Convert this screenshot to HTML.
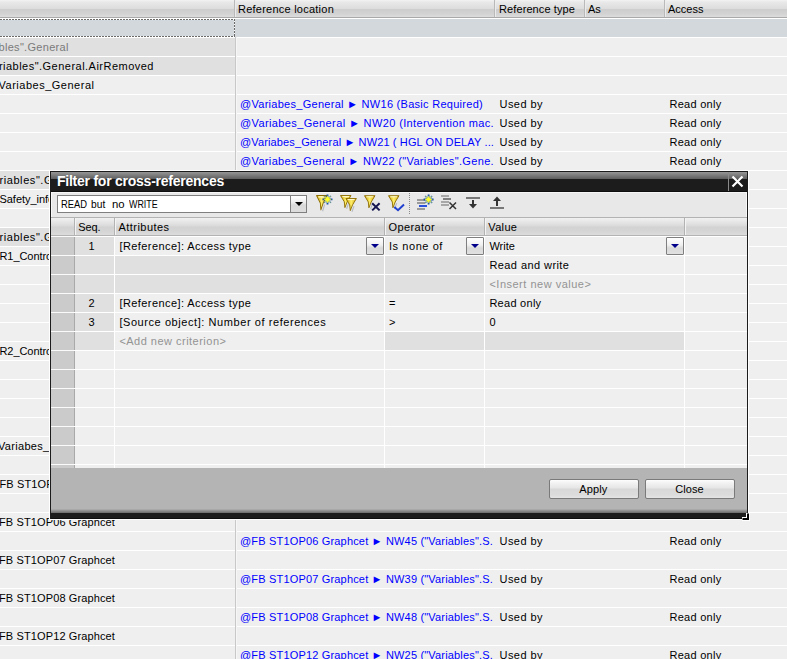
<!DOCTYPE html>
<html><head><meta charset="utf-8">
<style>
*{box-sizing:border-box;margin:0;padding:0}
html,body{width:787px;height:659px;overflow:hidden}
body{position:relative;background:#efefef;font-family:"Liberation Sans", sans-serif;font-size:11px;color:#000}
.a{position:absolute}
.tx{position:absolute;white-space:pre}
/* background rows: white line every 19px starting y=18 */
#rows{position:absolute;left:0;top:18px;width:787px;height:641px;
 background:repeating-linear-gradient(to bottom,#ffffff 0,#ffffff 1px,#efefef 1px,#efefef 19px)}
#hdr{position:absolute;left:0;top:0;width:787px;height:18px;
 background:linear-gradient(to bottom,#f3f3f3 0,#e9e9e9 2px,#dcdcdc 9px,#cdcdcd 9px,#d3d3d3 14px,#dcdcdc 17px);
 border-bottom:1px solid #a9a9a9}
.hsep{position:absolute;top:0;width:1px;height:17px;background:#b9b9b9;box-shadow:1px 0 0 #ececec}
.dk{position:absolute;left:0;width:235px;height:18px;background:#e0e0e0}
#sel{position:absolute;left:0;top:19px;width:787px;height:18px;background:#d3d8dc}
#selb{position:absolute;left:0;top:19px;width:235px;height:18px;
 background:repeating-linear-gradient(to right,#6a6a6a 0,#6a6a6a 2px,#fff 2px,#fff 3px) top left/100% 1px no-repeat,repeating-linear-gradient(to right,#6a6a6a 0,#6a6a6a 2px,#fff 2px,#fff 3px) bottom left/100% 1px no-repeat,repeating-linear-gradient(to bottom,#6a6a6a 0,#6a6a6a 2px,#fff 2px,#fff 3px) top right/1px 100% no-repeat}
#vl{position:absolute;left:235px;top:37px;width:1px;height:622px;background:#c8c8c8;box-shadow:1px 0 0 #f6f6f6}

/* dialog */
#dlg{position:absolute;left:49px;top:170px;width:700px;height:350px;border:1px solid #fff}
#dlgin{position:absolute;left:50px;top:171px;width:698px;height:348px;background:#1c1c1c}
#title{position:absolute;left:51px;top:172px;width:696px;height:20px;
 background:linear-gradient(to bottom,#969696 0,#5e5e5e 7px,#1c1c1c 7px,#1c1c1c 19px,#0e0e0e 19px)}
#cbsep{position:absolute;left:728px;top:172px;width:1px;height:19px;background:#8a8a8a}
#body{position:absolute;left:51px;top:192px;width:696px;height:276px;background:#e8e8e8;
 border-top:1px solid #f6f6f6;border-left:1px solid #f8f8f8;border-right:1px solid #f8f8f8}
#combo{position:absolute;left:57px;top:195px;width:250px;height:18px;background:#fff;border:1px solid #7f7f7f}
#cbtn{position:absolute;left:290px;top:195px;width:17px;height:18px;border:1px solid #7f7f7f;
 background:linear-gradient(to bottom,#ffffff 0,#eeeeee 6px,#d9d9d9 9px,#dedede 17px)}
.tri{position:absolute;width:0;height:0;border-left:4px solid transparent;border-right:4px solid transparent;border-top:4px solid #000}
#grid{position:absolute;left:51px;top:217px;width:696px;height:251px;background:#efefef;border-top:1px solid #b3b3b3}
#ghdr{position:absolute;left:51px;top:218px;width:696px;height:18px;
 background:linear-gradient(to bottom,#f1f1f1 0,#e6e6e6 4px,#dadada 8px,#d2d2d2 9px,#d6d6d6 14px,#dcdcdc 17px);
 border-bottom:1px solid #b3b3b3}
.gsep{position:absolute;top:218px;width:1px;height:17px;background:#b3b3b3;box-shadow:1px 0 0 #f4f4f4}
#grows{position:absolute;left:51px;top:236px;width:696px;height:232px;
 background:repeating-linear-gradient(to bottom,#ffffff 0,#ffffff 1px,#efefef 1px,#efefef 19px)}
#rh{position:absolute;left:51px;top:236px;width:23px;height:232px;
 background:repeating-linear-gradient(to bottom,#fafafa 0,#fafafa 1px,#cbcbcb 1px,#cbcbcb 19px)}
#rhl{position:absolute;left:74px;top:236px;width:1px;height:232px;background:repeating-linear-gradient(to bottom,#fff 0,#fff 1px,#a9a9a9 1px,#a9a9a9 19px)}
.gv{position:absolute;top:236px;width:1px;height:232px;background:#ffffff}
.gc{position:absolute;height:18px;background:#e0e0e0}
.dd{position:absolute;width:18px;height:18px;border:1px solid #7f7f7f;border-radius:1px;
 background:linear-gradient(to bottom,#ffffff 0,#f0f0f0 7px,#d9d9d9 10px,#e2e2e2 17px)}
.dd i{position:absolute;left:4px;top:6px;width:0;height:0;border-left:4px solid transparent;border-right:4px solid transparent;border-top:4px solid #00008b}
#foot{position:absolute;left:51px;top:468px;width:696px;height:45px;
 background:linear-gradient(to bottom,#b4b4b4 0,#b4b4b4 41px,#9c9c9c 42px,#7c7c7c 44px,#6a6a6a 45px)}
#fdark{position:absolute;left:51px;top:513px;width:696px;height:6px;background:linear-gradient(to bottom,#1c1c1c 0,#1c1c1c 5px,#0e0e0e 5px)}
.btn{position:absolute;top:479px;height:20px;border:1px solid #7a7a7a;border-radius:2px;
 background:linear-gradient(to bottom,#fdfdfd 0,#f2f2f2 3px,#e6e6e6 8px,#d8d8d8 9px,#dcdcdc 15px,#e4e4e4 18px)}
#grip{position:absolute;left:741px;top:512px;width:9px;height:9px}
</style></head><body>
<div id="rows"></div>
<div class="dk" style="top:38px"></div>
<div class="dk" style="top:57px"></div>
<div class="dk" style="top:171px"></div>
<div class="dk" style="top:228px"></div>
<div id="sel"></div>
<div id="selb"></div>
<div id="vl"></div>
<div id="hdr"></div>
<div class="hsep" style="left:234px"></div>
<div class="hsep" style="left:494px"></div>
<div class="hsep" style="left:584px"></div>
<div class="hsep" style="left:664px"></div>
<div class='tx' style='top:1px;height:17px;line-height:17px;color:#000;letter-spacing:0.237px;left:238px;'>Reference location</div>
<div class='tx' style='top:1px;height:17px;line-height:17px;color:#000;letter-spacing:0.099px;left:499px;'>Reference type</div>
<div class='tx' style='top:1px;height:17px;line-height:17px;color:#000;left:588px;'>As</div>
<div class='tx' style='top:1px;height:17px;line-height:17px;color:#000;left:668px;'>Access</div>
<div class='tx' style='top:38px;height:18px;line-height:18px;color:#7a7a7a;letter-spacing:0.300px;right:718.3px;'>ariables".General</div>
<div class='tx' style='top:57px;height:18px;line-height:18px;color:#000;letter-spacing:0.479px;right:633.1px;'>riables".General.AirRemoved</div>
<div class='tx' style='top:76px;height:18px;line-height:18px;color:#000;letter-spacing:0.509px;right:692.5px;'>Variabes_General</div>
<div class='tx' style='top:171px;height:18px;line-height:18px;color:#000;letter-spacing:0.569px;left:-0.5px;'>riables".General</div>
<div class='tx' style='top:190px;height:18px;line-height:18px;color:#000;letter-spacing:-0.042px;left:-0.5px;'>Safety_info</div>
<div class='tx' style='top:228px;height:18px;line-height:18px;color:#000;letter-spacing:0.569px;left:-0.5px;'>riables".General</div>
<div class='tx' style='top:247px;height:18px;line-height:18px;color:#000;letter-spacing:-0.072px;left:-0.5px;'>R1_Control</div>
<div class='tx' style='top:342px;height:18px;line-height:18px;color:#000;letter-spacing:-0.072px;left:-0.5px;'>R2_Control</div>
<div class='tx' style='top:437px;height:18px;line-height:18px;color:#000;letter-spacing:0.309px;left:-2px;'>Variabes_General</div>
<div class='tx' style='top:475px;height:18px;line-height:18px;color:#000;letter-spacing:0.120px;left:-0.5px;'>FB ST1OP01 Graphcet</div>
<div class='tx' style='top:513px;height:18px;line-height:18px;color:#000;letter-spacing:0.120px;left:-1px;'>FB ST1OP06 Graphcet</div>
<div class='tx' style='top:551px;height:18px;line-height:18px;color:#000;letter-spacing:0.120px;left:-1px;'>FB ST1OP07 Graphcet</div>
<div class='tx' style='top:589px;height:18px;line-height:18px;color:#000;letter-spacing:0.120px;left:-1px;'>FB ST1OP08 Graphcet</div>
<div class='tx' style='top:627px;height:18px;line-height:18px;color:#000;letter-spacing:0.120px;left:-1px;'>FB ST1OP12 Graphcet</div>
<div class='tx' style='top:95px;height:18px;line-height:18px;color:#0000ff;letter-spacing:0.279px;left:240px;'>@Variabes_General ► NW16 (Basic Required)</div>
<div class='tx' style='top:95px;height:18px;line-height:18px;color:#000;letter-spacing:0.449px;left:499.5px;'>Used by</div>
<div class='tx' style='top:95px;height:18px;line-height:18px;color:#000;letter-spacing:0.273px;left:669.5px;'>Read only</div>
<div class='tx' style='top:114px;height:18px;line-height:18px;color:#0000ff;letter-spacing:0.380px;left:240px;'>@Variabes_General ► NW20 (Intervention mac.</div>
<div class='tx' style='top:114px;height:18px;line-height:18px;color:#000;letter-spacing:0.449px;left:499.5px;'>Used by</div>
<div class='tx' style='top:114px;height:18px;line-height:18px;color:#000;letter-spacing:0.273px;left:669.5px;'>Read only</div>
<div class='tx' style='top:133px;height:18px;line-height:18px;color:#0000ff;letter-spacing:0.129px;left:240px;'>@Variabes_General ► NW21 ( HGL ON DELAY ...</div>
<div class='tx' style='top:133px;height:18px;line-height:18px;color:#000;letter-spacing:0.449px;left:499.5px;'>Used by</div>
<div class='tx' style='top:133px;height:18px;line-height:18px;color:#000;letter-spacing:0.273px;left:669.5px;'>Read only</div>
<div class='tx' style='top:152px;height:18px;line-height:18px;color:#0000ff;letter-spacing:0.345px;left:240px;'>@Variabes_General ► NW22 ("Variables".Gene.</div>
<div class='tx' style='top:152px;height:18px;line-height:18px;color:#000;letter-spacing:0.449px;left:499.5px;'>Used by</div>
<div class='tx' style='top:152px;height:18px;line-height:18px;color:#000;letter-spacing:0.273px;left:669.5px;'>Read only</div>
<div class='tx' style='top:532px;height:18px;line-height:18px;color:#0000ff;letter-spacing:0.175px;left:240px;'>@FB ST1OP06 Graphcet ► NW45 ("Variables".S.</div>
<div class='tx' style='top:532px;height:18px;line-height:18px;color:#000;letter-spacing:0.449px;left:499.5px;'>Used by</div>
<div class='tx' style='top:532px;height:18px;line-height:18px;color:#000;letter-spacing:0.273px;left:669.5px;'>Read only</div>
<div class='tx' style='top:570px;height:18px;line-height:18px;color:#0000ff;letter-spacing:0.175px;left:240px;'>@FB ST1OP07 Graphcet ► NW39 ("Variables".S.</div>
<div class='tx' style='top:570px;height:18px;line-height:18px;color:#000;letter-spacing:0.449px;left:499.5px;'>Used by</div>
<div class='tx' style='top:570px;height:18px;line-height:18px;color:#000;letter-spacing:0.273px;left:669.5px;'>Read only</div>
<div class='tx' style='top:608px;height:18px;line-height:18px;color:#0000ff;letter-spacing:0.175px;left:240px;'>@FB ST1OP08 Graphcet ► NW48 ("Variables".S.</div>
<div class='tx' style='top:608px;height:18px;line-height:18px;color:#000;letter-spacing:0.449px;left:499.5px;'>Used by</div>
<div class='tx' style='top:608px;height:18px;line-height:18px;color:#000;letter-spacing:0.273px;left:669.5px;'>Read only</div>
<div class='tx' style='top:646px;height:18px;line-height:18px;color:#0000ff;letter-spacing:0.175px;left:240px;'>@FB ST1OP12 Graphcet ► NW25 ("Variables".S.</div>
<div class='tx' style='top:646px;height:18px;line-height:18px;color:#000;letter-spacing:0.449px;left:499.5px;'>Used by</div>
<div class='tx' style='top:646px;height:18px;line-height:18px;color:#000;letter-spacing:0.273px;left:669.5px;'>Read only</div>

<!-- dialog -->
<div id="dlg"></div>
<div id="dlgin"></div>
<div id="title"></div>
<div id="cbsep"></div>
<svg class="a" style="left:731px;top:175px" width="13" height="13" viewBox="0 0 13 13"><path d="M1.5 1.5L11.5 11.5M11.5 1.5L1.5 11.5" stroke="#fff" stroke-width="2.2" fill="none"/></svg>
<div id="body"></div>
<div id="combo"></div>
<div id="cbtn"><div class="tri" style="left:4px;top:6px;border-left-width:4px;border-right-width:4px;border-top-width:4px"></div></div>

<!-- toolbar icons -->
<svg class="a" style="left:312px;top:192px" width="200" height="24" viewBox="0 0 200 24">
 <defs>
  <linearGradient id="gold" x1="0" y1="0" x2="1" y2="0">
   <stop offset="0" stop-color="#c89e00"/><stop offset="0.5" stop-color="#fff06a"/><stop offset="1" stop-color="#d0a40a"/>
  </linearGradient>
  <g id="fun">
   <path d="M7.6 7.5L5.6 13.2" stroke="#a0a8b8" stroke-width="1.1" opacity="0.7" transform="translate(1 0.6)"/>
   <path d="M0.5 0.5H11L7.2 6.8L4.9 12.6L4.3 6.8Z" fill="url(#gold)" stroke="#8c6c00" stroke-width="0.9" stroke-linejoin="round"/>
   <path d="M2.3 1.6H9.2" stroke="#fffbd8" stroke-width="1"/>
  </g>
  <g id="star">
   <path d="M-3.5 -3.5L3.5 3.5M3.5 -3.5L-3.5 3.5" stroke="#2a68b8" stroke-width="1.3"/>
   <path d="M0 -5V5M-5 0H5" stroke="#1a50a0" stroke-width="1.8"/>
   <circle r="2.3" fill="#ffff28"/>
   <path d="M-3 -3L3 3M3 -3L-3 3M0 -3.6V3.6M-3.6 0H3.6" stroke="#ffff28" stroke-width="0.8"/>
  </g>
 </defs>
 <use href="#fun" transform="translate(4 3) scale(1 1.18)"/>
 <use href="#star" x="15.5" y="7.4"/>
 <use href="#fun" x="28" y="3"/>
 <use href="#fun" x="33.4" y="6"/>
 <use href="#fun" x="52" y="3.2"/>
 <path d="M60.2 11.2L67.6 18.4M67.6 11.2L60.2 18.4" stroke="#141450" stroke-width="2"/>
 <use href="#fun" x="76" y="3.2"/>
 <path d="M82.3 15L86 18.2L92 12.6" stroke="#2040d0" stroke-width="2" fill="none"/>
 <!-- separator -->
 <path d="M97.5 1V22" stroke="#8a8a8a" stroke-width="1" stroke-dasharray="1 1"/>
 <!-- icon5 list + star -->
 <rect x="105" y="7" width="8" height="2" fill="#9a9a9a"/>
 <rect x="105" y="10" width="8" height="2" fill="#9a9a9a"/>
 <rect x="107" y="13" width="8" height="2" fill="#2a50e0"/>
 <rect x="105" y="16" width="8" height="2" fill="#9a9a9a"/>
 <use href="#star" x="116.6" y="7.5"/>
 <!-- icon6 list delete -->
 <rect x="129" y="3" width="8" height="2" fill="#a8a8a8"/>
 <rect x="131" y="6" width="8" height="2" fill="#808080"/>
 <rect x="129" y="9" width="8" height="2" fill="#a8a8a8"/>
 <rect x="129" y="12" width="8" height="2" fill="#a8a8a8"/>
 <path d="M137.5 10.5L144 17M144 10.5L137.5 17" stroke="#333" stroke-width="1.5"/>
 <!-- icon7 move down -->
 <rect x="154" y="5" width="14" height="2" fill="#777"/>
 <path d="M161 8V13" stroke="#333" stroke-width="2"/>
 <path d="M157 12H165L161 16.5Z" fill="#333"/>
 <!-- icon8 move up -->
 <path d="M181 9H189L185 4.5Z" fill="#333"/>
 <path d="M185 9V14" stroke="#333" stroke-width="2"/>
 <rect x="178" y="15" width="14" height="2" fill="#777"/>
</svg>

<!-- grid -->
<div id="grid"></div>
<div id="ghdr"></div>
<div class="gsep" style="left:74px"></div>
<div class="gsep" style="left:114px"></div>
<div class="gsep" style="left:384px"></div>
<div class="gsep" style="left:484px"></div>
<div class="gsep" style="left:684px"></div>
<div id="grows"></div>
<!-- gray cells -->
<div class="gc" style="left:75px;top:237px;width:39px;height:113px;background:repeating-linear-gradient(to bottom,#e0e0e0 0,#e0e0e0 18px,#fff 18px,#fff 19px)"></div>
<div class="gc" style="left:115px;top:256px;width:269px;height:37px;background:repeating-linear-gradient(to bottom,#e0e0e0 0,#e0e0e0 18px,#fff 18px,#fff 19px)"></div>
<div class="gc" style="left:385px;top:256px;width:99px;height:37px;background:repeating-linear-gradient(to bottom,#e0e0e0 0,#e0e0e0 18px,#fff 18px,#fff 19px)"></div>
<div class="gc" style="left:385px;top:332px;width:99px"></div>
<div class="gc" style="left:485px;top:332px;width:199px"></div>
<div class="gv" style="left:114px"></div>
<div class="gv" style="left:384px"></div>
<div class="gv" style="left:484px"></div>
<div class="gv" style="left:684px"></div>
<div id="rh"></div>
<div id="rhl"></div>
<div class="dd" style="left:366px;top:237px"><i></i></div>
<div class="dd" style="left:466px;top:237px"><i></i></div>
<div class="dd" style="left:666px;top:237px"><i></i></div>

<div id="foot"></div>
<div id="fdark"></div>
<div class="btn" style="left:549px;width:90px"></div>
<div class="btn" style="left:645px;width:90px"></div>
<svg id="grip" viewBox="0 0 9 9"><path d="M7 1V7H1" stroke="#fff" stroke-width="4" fill="none"/><path d="M7 1.5V7H1.5" stroke="#000" stroke-width="2" fill="none"/></svg>
<div class='tx' style='top:172px;height:19px;line-height:19px;color:#fff;font-size:14px;font-weight:bold;letter-spacing:-0.242px;left:57px;'>Filter for cross-references</div>
<div class='tx' style='top:219px;height:17px;line-height:17px;color:#000;letter-spacing:-0.160px;left:78.3px;'>Seq.</div>
<div class='tx' style='top:219px;height:17px;line-height:17px;color:#000;letter-spacing:0.453px;left:118.5px;'>Attributes</div>
<div class='tx' style='top:219px;height:17px;line-height:17px;color:#000;letter-spacing:0.385px;left:388.5px;'>Operator</div>
<div class='tx' style='top:219px;height:17px;line-height:17px;color:#000;letter-spacing:0.334px;left:488.3px;'>Value</div>
<div class='tx' style='top:237px;height:18px;line-height:18px;color:#000;left:88.6px;'>1</div>
<div class='tx' style='top:237px;height:18px;line-height:18px;color:#000;letter-spacing:0.430px;left:119.4px;'>[Reference]: Access type</div>
<div class='tx' style='top:237px;height:18px;line-height:18px;color:#000;letter-spacing:0.567px;left:389px;'>Is none of</div>
<div class='tx' style='top:237px;height:18px;line-height:18px;color:#000;left:489.4px;'>Write</div>
<div class='tx' style='top:256px;height:18px;line-height:18px;color:#000;letter-spacing:0.429px;left:489.4px;'>Read and write</div>
<div class='tx' style='top:275px;height:18px;line-height:18px;color:#939393;letter-spacing:0.503px;left:489.4px;'>&lt;Insert new value&gt;</div>
<div class='tx' style='top:294px;height:18px;line-height:18px;color:#000;left:88.6px;'>2</div>
<div class='tx' style='top:294px;height:18px;line-height:18px;color:#000;letter-spacing:0.430px;left:119.4px;'>[Reference]: Access type</div>
<div class='tx' style='top:294px;height:18px;line-height:18px;color:#000;left:389px;'>=</div>
<div class='tx' style='top:294px;height:18px;line-height:18px;color:#000;letter-spacing:0.273px;left:489.4px;'>Read only</div>
<div class='tx' style='top:313px;height:18px;line-height:18px;color:#000;left:88.6px;'>3</div>
<div class='tx' style='top:313px;height:18px;line-height:18px;color:#000;letter-spacing:0.571px;left:119.4px;'>[Source object]: Number of references</div>
<div class='tx' style='top:313px;height:18px;line-height:18px;color:#000;left:389px;'>&gt;</div>
<div class='tx' style='top:313px;height:18px;line-height:18px;color:#000;left:489.4px;'>0</div>
<div class='tx' style='top:332px;height:18px;line-height:18px;color:#939393;letter-spacing:0.482px;left:119.4px;'>&lt;Add new criterion&gt;</div>
<div class='tx' style='top:480px;height:19px;line-height:19px;color:#000;letter-spacing:0.094px;left:579.3px;'>Apply</div>
<div class='tx' style='top:480px;height:19px;line-height:19px;color:#000;letter-spacing:0.075px;left:675.2px;'>Close</div>
<div class="tx" style="top:195px;left:60.7px;line-height:18px;transform:scaleX(0.85);transform-origin:0 0">READ</div>
<div class="tx" style="top:195px;left:91.3px;line-height:18px;transform:scaleX(0.93);transform-origin:0 0">but</div>
<div class="tx" style="top:195px;left:112.4px;line-height:18px;transform:scaleX(1.03);transform-origin:0 0">no</div>
<div class="tx" style="top:195px;left:129.2px;line-height:18px;transform:scaleX(0.81);transform-origin:0 0">WRITE</div>
</body></html>
